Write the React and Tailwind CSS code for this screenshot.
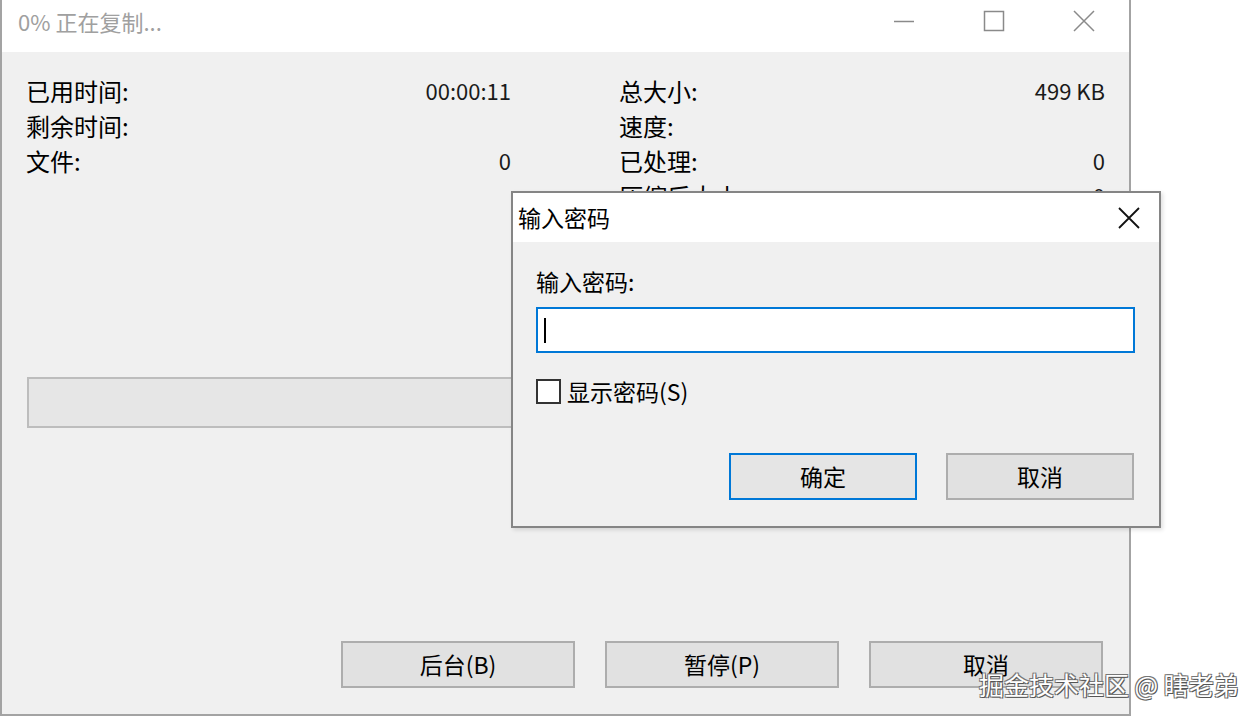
export default function App() {
  const leftRows = [
    ["已用时间:", "00:00:11"],
    ["剩余时间:", ""],
    ["文件:", "0"],
  ];
  const rightRows = [
    ["总大小:", "499 KB"],
    ["速度:", ""],
    ["已处理:", "0"],
    ["压缩后大小:", "0"],
  ];

  return (
    <div className="relative h-[718px] w-[1260px] overflow-hidden bg-white font-['Noto_Sans_CJK_SC',sans-serif] text-black">
      {/* copy progress window */}
      <div className="flex h-[716px] w-[1131px] flex-col border-x-2 border-b-2 border-[#a3a3a3] bg-[#f0f0f0]">
        <div className="flex h-[52px] shrink-0 items-start bg-white">
          <div className="pl-[16px] pt-[5px] text-[22px] leading-[32px] text-[#a0a0a0]">0% 正在复制...</div>
          <div className="ml-auto flex">
            <div className="flex h-[41px] w-[90px] items-center justify-center">
              <svg width="22" height="22" viewBox="0 0 22 22">
                <line x1="1" y1="11.5" x2="21" y2="11.5" stroke="#8a8a8a" strokeWidth="1.5" />
              </svg>
            </div>
            <div className="flex h-[41px] w-[90px] items-center justify-center">
              <svg width="22" height="22" viewBox="0 0 22 22">
                <rect x="1.5" y="1.5" width="19" height="19" fill="none" stroke="#8a8a8a" strokeWidth="1.5" />
              </svg>
            </div>
            <div className="flex h-[41px] w-[90px] items-center justify-center">
              <svg width="22" height="22" viewBox="0 0 22 22">
                <path d="M1 1L21 21M21 1L1 21" stroke="#8a8a8a" strokeWidth="1.5" />
              </svg>
            </div>
          </div>
        </div>

        <div className="flex flex-1 flex-col pl-[24px] pr-[24px] pt-[21px] pb-[26px]">
          {/* statistics */}
          <div className="flex justify-between">
            <div className="w-[485px]">
              {leftRows.map(([k, v]) => (
                <div key={k} className="flex h-[35px] items-center justify-between">
                  <span className="text-[24px]">{k}</span>
                  <span className="text-[22px] text-[#1a1a1a]">{v}</span>
                </div>
              ))}
            </div>
            <div className="w-[486px]">
              {rightRows.map(([k, v]) => (
                <div key={k} className="flex h-[35px] items-center justify-between">
                  <span className="text-[24px]">{k}</span>
                  <span className="text-[22px] text-[#1a1a1a]">{v}</span>
                </div>
              ))}
            </div>
          </div>

          {/* progress bar */}
          <div className="ml-px mt-[164px] h-[51px] w-[1078px] border-2 border-[#bdbdbd] bg-[#e6e6e6]" />

          {/* action buttons */}
          <div className="mr-[2px] mt-auto flex justify-end gap-[30px]">
            {["后台(B)", "暂停(P)", "取消"].map((t) => (
              <button
                key={t}
                className="flex h-[47px] w-[234px] items-center justify-center border-2 border-[#adadad] bg-[#e1e1e1] text-[23px]"
              >
                {t}
              </button>
            ))}
          </div>
        </div>
      </div>

      {/* password dialog */}
      <div className="absolute left-[511px] top-[191px] flex h-[337px] w-[650px] flex-col border-2 border-[#858585] bg-[#f0f0f0] shadow-[2px_2px_4px_rgba(0,0,0,0.12)]">
        <div className="flex h-[49px] shrink-0 items-center bg-white">
          <span className="pl-[5px] text-[23px]">输入密码</span>
          <div className="ml-auto mr-[19px] flex items-center">
            <svg width="22" height="22" viewBox="0 0 22 22">
              <path d="M1 1L21 21M21 1L1 21" stroke="#111" strokeWidth="1.8" />
            </svg>
          </div>
        </div>
        <div className="flex flex-1 flex-col px-[23px] pt-[23px]">
          <div className="text-[23px] leading-[32px]">输入密码:</div>
          <div className="mt-[10px] flex h-[46px] w-[599px] items-center border-2 border-[#0078d7] bg-white pl-[6px]">
            <div className="h-[25px] w-[2px] bg-black" />
          </div>
          <div className="mt-[24px] flex items-center">
            <div className="h-[25px] w-[25px] border-2 border-[#333] bg-white" />
            <span className="ml-[6px] text-[23px] leading-[28px]">显示密码(S)</span>
          </div>
          <div className="mr-[2px] mt-[48px] flex justify-end gap-[29px]">
            <button className="flex h-[47px] w-[188px] items-center justify-center border-2 border-[#0078d7] bg-[#e5e5e5] text-[23px]">
              确定
            </button>
            <button className="flex h-[47px] w-[188px] items-center justify-center border-2 border-[#adadad] bg-[#e1e1e1] text-[23px]">
              取消
            </button>
          </div>
        </div>
      </div>

      {/* site watermark */}
      <div className="absolute left-[979px] top-[666px] text-[25px] leading-[36px] text-white [text-shadow:1px_1px_0_#555,-1px_-1px_0_#777,1px_-1px_0_#777,-1px_1px_0_#777]">
        掘金技术社区 @ 瞎老弟
      </div>
    </div>
  );
}
